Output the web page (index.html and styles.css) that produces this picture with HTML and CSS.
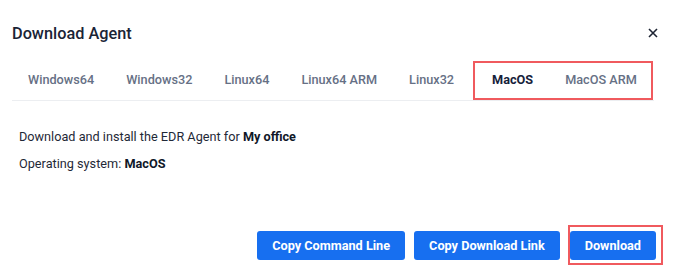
FILE: index.html
```html
<!DOCTYPE html>
<html lang="en">
<head>
    <meta charset="UTF-8">
    <title>Download Agent</title>
    <link rel="stylesheet" href="styles.css">
</head>
<body>
    <div class="modal">
        <div class="header">
            <h1 class="title">Download Agent</h1>
            <span class="close">
                <svg width="10" height="10" viewBox="0 0 10 10"><path d="M1 1L9 9M9 1L1 9" stroke="#1d2433" stroke-width="1.6" fill="none"/></svg>
            </span>
        </div>
        <div class="tabs">
            <span class="tab">Windows64</span>
            <span class="tab">Windows32</span>
            <span class="tab">Linux64</span>
            <span class="tab">Linux64 ARM</span>
            <span class="tab">Linux32</span>
            <div class="tab-mark">
                <span class="tab active">MacOS</span>
                <span class="tab">MacOS ARM</span>
            </div>
        </div>
        <div class="content">
            <p>Download and install the EDR Agent for <b>My office</b></p>
            <p>Operating system: <b>MacOS</b></p>
        </div>
        <div class="footer">
            <button class="btn">Copy Command Line</button>
            <button class="btn">Copy Download Link</button>
            <span class="btn-mark"><button class="btn">Download</button></span>
        </div>
    </div>
</body>
</html>
```

FILE: styles.css
```css
body {
    margin: 0;
    background-color: #fff;
    font-family: Roboto, "Liberation Sans", sans-serif;
    color: #1d2433;
}
.modal {
    width: 674px;
    height: 278px;
}
.header {
    display: flex;
    justify-content: space-between;
    align-items: center;
    height: 24px;
    padding: 22px 16px 0 12px;
}
.title {
    margin: 0;
    font-size: 16.3px;
    font-weight: 500;
    line-height: 24px;
    color: #1a2436;
}
.close {
    display: flex;
    margin-top: -3px;
}
.tabs {
    display: flex;
    margin: 15px 20px 0 12px;
    border-bottom: 1px solid #eceef1;
}
.tab {
    padding: 10px 16px 11px;
    font-size: 12.7px;
    font-weight: 500;
    line-height: 18px;
    white-space: nowrap;
    color: #667085;
}
.tab-mark {
    display: flex;
    margin-left: 3px;
    padding-left: 3px;
    box-shadow: inset 0 0 0 2px #f05a5e;
}
.active {
    color: #16213a;
    font-weight: 700;
}
.content {
    padding: 27px 19px 0;
    font-size: 12.7px;
    line-height: 18px;
    color: #1f2937;
}
.content p {
    margin: 0;
}
.content p + p {
    margin-top: 9px;
}
.content b {
    font-weight: 700;
    color: #101828;
}
.footer {
    display: flex;
    justify-content: flex-end;
    align-items: center;
    gap: 8px;
    padding: 52px 11px 0 0;
}
.footer .btn:first-child {
    margin-right: 1px;
}
.btn {
    height: 29px;
    padding: 0 15px;
    border: none;
    border-radius: 3px;
    background-color: #176ff0;
    color: #fff;
    font-family: Roboto, "Liberation Sans", sans-serif;
    font-size: 12.7px;
    font-weight: 700;
}
.btn-mark {
    display: flex;
    padding: 4px 4px 3px 0;
    border: 2px solid #f05a5e;
}
```
